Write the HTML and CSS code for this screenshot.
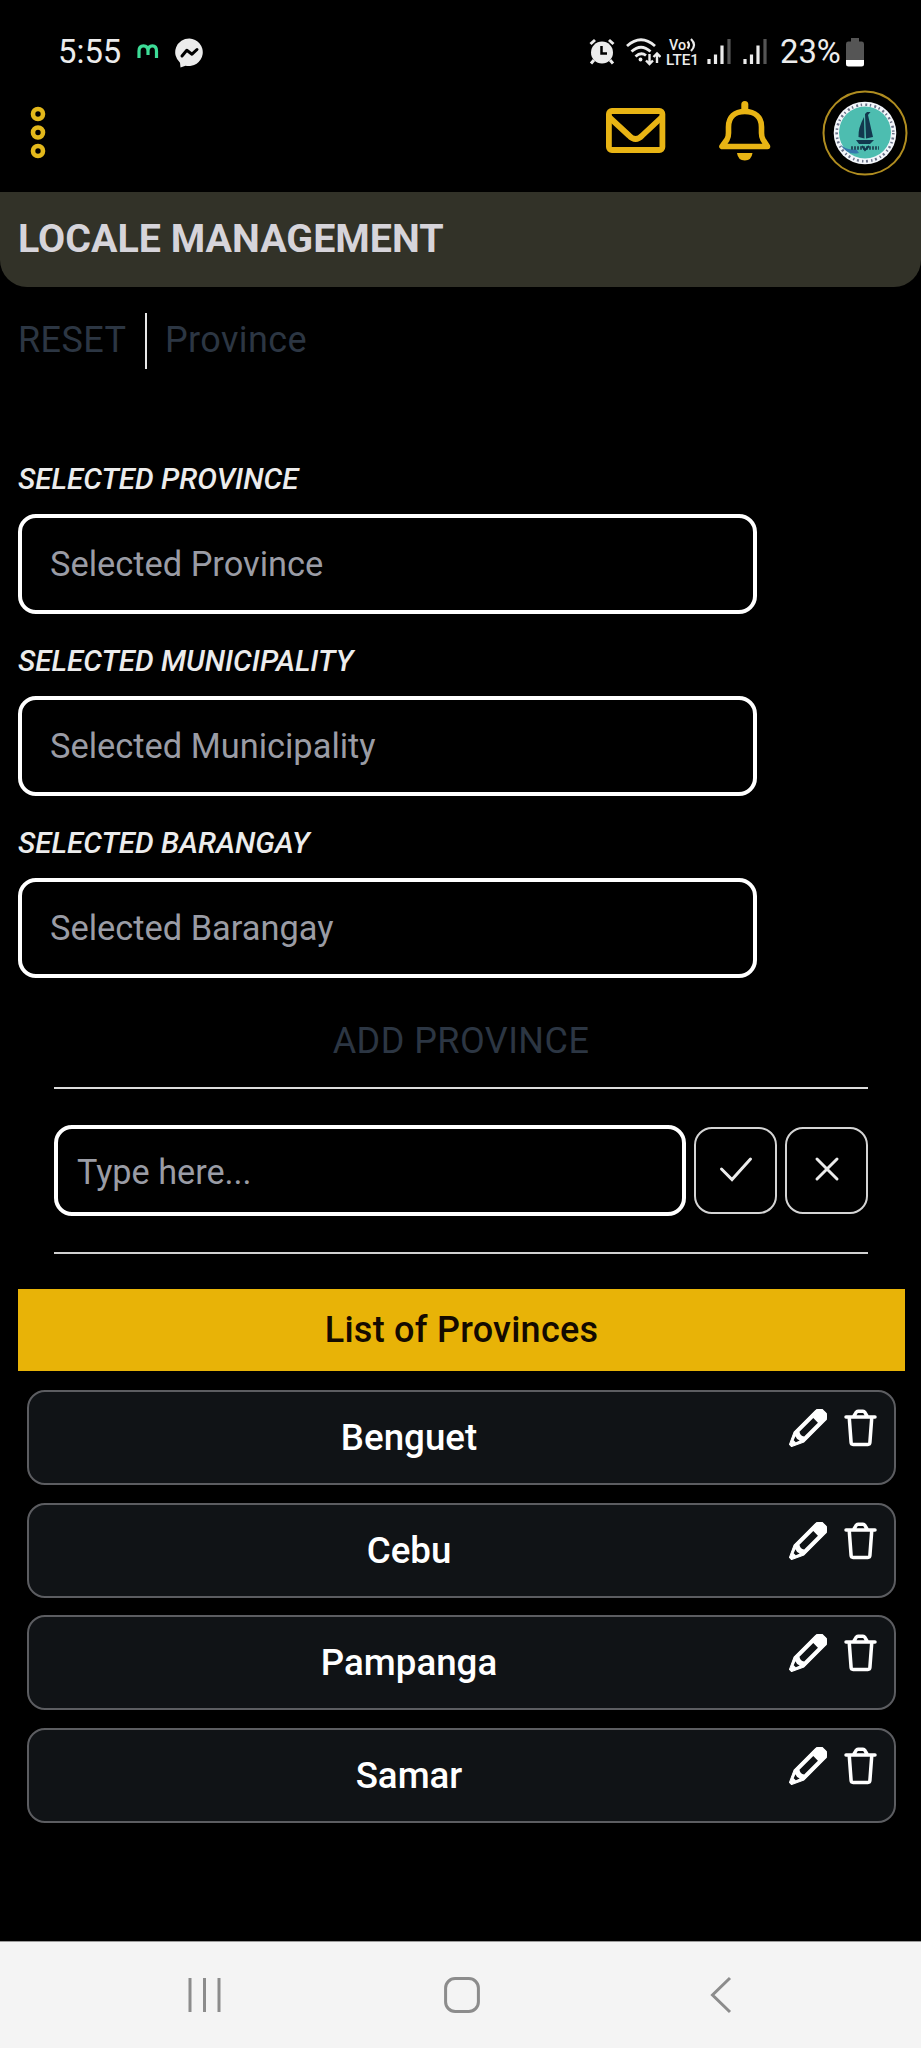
FILE: index.html
```html
<!DOCTYPE html>
<html lang="en">
<head>
<meta charset="utf-8">
<title>Locale Management</title>
<link rel="stylesheet" href="styles.css">
</head>
<body>
<svg class="defs" width="0" height="0" aria-hidden="true">
  <symbol id="pencil" viewBox="0 0 38 38">
    <g transform="translate(.8 37.200) rotate(-45)">
      <path d="M1 -1.500 L13 -7 H43 Q49 -7 49 -1.500 V1.500 Q49 7 43 7 H13 L1 1.500 Z" fill="currentColor" stroke="currentColor" stroke-width="1" stroke-linejoin="round"/>
      <path d="M17 -3.300 H36.500 V3.300 H17 Q14.500 0 17 -3.300 Z M7 -1.500 L11 -3 Q9.500 0 11 3 L7 1.500 Z" fill="#101316"/>
    </g>
  </symbol>
  <symbol id="trash" viewBox="0 0 32 38">
    <path d="M1.500 8 H30.500 M4.700 8 L6.600 33.500 A2 2 0 0 0 8.600 35.400 H23.400 A2 2 0 0 0 25.400 33.500 L27.300 8 M9.200 7.500 L11.800 3.200 Q12.300 2.200 13.500 2.200 H18.500 Q19.700 2.200 20.200 3.200 L22.800 7.500" fill="none" stroke="currentColor" stroke-width="3.500" stroke-linecap="round" stroke-linejoin="round"/>
  </symbol>
</svg>
<div class="screen">
  <div class="status">
    <span class="clock">5:55</span>
    <svg class="ic-m" width="22" height="16" viewBox="0 0 22 16"><path d="M2 14 V7 Q2 1.800 6.500 1.800 Q11 1.800 11 7 V11 M11 7 Q11 1.800 15.500 1.800 Q19.500 1.800 19.500 7 V14" fill="none" stroke="#3ddc97" stroke-width="3.200"/></svg>
    <svg class="ic-chat" width="29" height="30" viewBox="0 0 29 30"><path d="M14.500 .5 A14 13.800 0 1 1 10.500 27.700 L5.500 29.500 L5 24.700 A14 13.800 0 0 1 14.500 .5 Z" fill="#ececec"/><path d="M7 18 L11.800 12.300 L17 16.200 L22 11.500" fill="none" stroke="#000" stroke-width="3" stroke-linecap="round" stroke-linejoin="round"/></svg>
    <span class="grow"></span>
    <svg width="26" height="27" viewBox="0 0 26 27"><circle cx="13" cy="14.500" r="11" fill="#ececec"/><path d="M1.500 6 L6 2 M24.500 6 L20 2 M5 22 L2 25.500 M21 22 L24 25.500" stroke="#ececec" stroke-width="3"/><path d="M12.500 8 V15.500 H18" fill="none" stroke="#000" stroke-width="2.500"/></svg>
    <svg class="ic-wifi" width="35" height="28" viewBox="0 0 35 28"><g fill="none" stroke="#ececec" stroke-width="2.800"><path d="M1 8 Q15 -4.500 29 8 M5.500 13.500 Q15 5 24.500 13.500 M9.500 18.500 Q15 13.500 20 17.500"/><path d="M23.500 16 V26 M20 22.500 L23.500 26 L27 22.500 M31 25 V16 M27.500 19 L31 15.500 L34.500 19" stroke-width="2.400"/></g><circle cx="14.500" cy="21.500" r="1.900" fill="#ececec"/></svg>
    <svg class="ic-volte" width="34" height="28" viewBox="0 0 34 28"><g class="volte"><text x="3" y="12" textLength="17" lengthAdjust="spacingAndGlyphs">Vo</text><text x="0" y="27" textLength="33" lengthAdjust="spacingAndGlyphs">LTE1</text></g><path d="M21.500 3.500 Q24.500 7 21.500 10.500 M25 1 Q31 7 25 13" fill="none" stroke="#ececec" stroke-width="2.200"/></svg>
    <svg class="ic-sig" width="25" height="26" viewBox="0 0 25 26"><path d="M2 20 V25 M8.500 15.500 V25 M15 6.500 V25" stroke="#ececec" stroke-width="3.200"/><path d="M22 0 V25" stroke="#555" stroke-width="3.200"/></svg>
    <svg class="ic-sig2" width="25" height="26" viewBox="0 0 25 26"><path d="M2 20 V25 M8.500 15.500 V25 M15 6.500 V25" stroke="#ececec" stroke-width="3.200"/><path d="M22 0 V25" stroke="#555" stroke-width="3.200"/></svg>
    <span class="battery-level">23%</span>
    <svg class="ic-bat" width="18" height="29" viewBox="0 0 18 29"><path d="M5 0 H13 V3.500 H16 Q18 3.500 18 6 V22 H0 V6 Q0 3.500 2 3.500 H5 Z" fill="#555"/><path d="M0 22 H18 V26 Q18 28.500 15.500 28.500 H2.500 Q0 28.500 0 26 Z" fill="#fff"/></svg>
  </div>
  <header class="appbar">
    <svg width="16" height="54" viewBox="0 0 16 54"><g fill="none" stroke="#e3b81b" stroke-width="4.600"><circle cx="8" cy="8" r="5"/><circle cx="8" cy="26.500" r="5"/><circle cx="8" cy="45" r="5"/></g></svg>
    <span class="grow"></span>
    <svg class="ic-mail" width="60" height="46" viewBox="0 0 60 46"><g fill="none" stroke="#e8b414" stroke-width="5.800" stroke-linejoin="round"><rect x="2.900" y="4" width="53.500" height="39" rx="3"/><path d="M3 10 L23 28.500 Q29.600 35.500 36.200 28.500 L56 10"/></g></svg>
    <svg class="ic-bell" width="52" height="60" viewBox="0 0 52 60"><path d="M3 45.500 H48.500 L44 38.500 Q42.500 36 42.500 32 V26 C42.500 16 36 10.500 25.800 10.500 C15.500 10.500 9.500 16 9.500 26 V32 Q9.500 36 8 38.500 Z" fill="none" stroke="#e8b414" stroke-width="5.600" stroke-linejoin="round"/><path d="M25.800 9 V3.500" stroke="#e8b414" stroke-width="7" stroke-linecap="round"/><path d="M18 52 H33.500 Q32.500 59.500 25.800 59.500 Q19 59.500 18 52 Z" fill="#e8b414"/></svg>
    <svg class="avatar" width="86" height="86" viewBox="0 0 86 86">
      <circle cx="43" cy="43" r="41.500" fill="none" stroke="#b08d20" stroke-width="2"/>
      <circle cx="43" cy="43" r="31.300" fill="#f3f6fb"/>
      <circle cx="43" cy="43" r="28.300" fill="none" stroke="#6a7288" stroke-width="2.600" stroke-dasharray="1.400 3.200 2 2.600"/>
      <circle cx="43" cy="42.500" r="26" fill="#4dbdb0"/>
      <path d="M43 24 L45 22 H48.500 L46 25 L51 47 L44 48.500 Z M42 27 Q36 38 36.500 47 L42.500 48.500 Z M34 50 H52 L48 54 H37 Z" fill="#12384e"/>
      <path d="M18 54 Q24 61 34 59 L37 63 Q25 66 18 54 Z" fill="#3577ac"/>
      <path d="M29 58 H57" stroke="#22505c" stroke-width="3.500" stroke-dasharray="2 1"/>
      <path d="M40 56 L43 60 L47 56" fill="none" stroke="#12384e" stroke-width="2"/>
    </svg>
  </header>
  <h1 class="title">LOCALE MANAGEMENT</h1>
  <nav class="crumbs"><span class="reset">RESET</span><span class="crumb">Province</span></nav>
  <section class="fields">
    <label class="field"><span class="label">SELECTED PROVINCE</span><span class="box">Selected Province</span></label>
    <label class="field"><span class="label">SELECTED MUNICIPALITY</span><span class="box">Selected Municipality</span></label>
    <label class="field"><span class="label">SELECTED BARANGAY</span><span class="box">Selected Barangay</span></label>
  </section>
  <section class="add">
    <h2 class="add-title">ADD PROVINCE</h2>
    <div class="add-row">
      <div class="add-input">Type here...</div>
      <button class="btn"><svg width="34" height="26" viewBox="0 0 34 26"><path d="M2.500 13 L13 23.500 L31.500 3" fill="none" stroke="#ececec" stroke-width="3" stroke-linecap="round"/></svg></button>
      <button class="btn"><svg width="26" height="26" viewBox="0 0 26 26"><path d="M3 3 L23 23 M23 3 L3 23" fill="none" stroke="#ececec" stroke-width="3" stroke-linecap="round"/></svg></button>
    </div>
  </section>
  <h2 class="list-title">List of Provinces</h2>
  <ul class="list">
    <li class="item"><span class="name">Benguet</span><svg class="pencil"><use href="#pencil"/></svg><svg class="trash"><use href="#trash"/></svg></li>
    <li class="item"><span class="name">Cebu</span><svg class="pencil"><use href="#pencil"/></svg><svg class="trash"><use href="#trash"/></svg></li>
    <li class="item"><span class="name">Pampanga</span><svg class="pencil"><use href="#pencil"/></svg><svg class="trash"><use href="#trash"/></svg></li>
    <li class="item"><span class="name">Samar</span><svg class="pencil"><use href="#pencil"/></svg><svg class="trash"><use href="#trash"/></svg></li>
  </ul>
  <footer class="sysnav">
    <svg width="34" height="36" viewBox="0 0 34 36"><path d="M2 1 V35 M16.500 1 V35 M31 1 V35" stroke="#8c8c8c" stroke-width="3"/></svg>
    <svg class="home" width="36" height="36" viewBox="0 0 36 36"><rect x="1.600" y="1.600" width="32.800" height="32.800" rx="9.500" fill="none" stroke="#8c8c8c" stroke-width="3"/></svg>
    <svg width="22" height="38" viewBox="0 0 22 38"><path d="M20 2 L2.500 19 L20 36" fill="none" stroke="#8c8c8c" stroke-width="3"/></svg>
  </footer>
</div>
</body>
</html>
```

FILE: styles.css
```css
* { box-sizing: border-box; margin: 0; padding: 0; }
body { background: #000; color: #ececec; font-family: Roboto, sans-serif; font-size: 36px; }
svg { display: block; flex: none; }
.defs { height: 0; }
.screen { width: 921px; height: 2048px; display: flex; flex-direction: column; }
.grow { flex: 1; }

.status { height: 86px; padding: 38px 57px 0 58px; display: flex; align-items: flex-start; }
.clock, .battery-level { font-size: 32.800px; line-height: 28px; height: 28px; white-space: nowrap; }
.clock { width: 79px; }
.ic-m { margin-top: 6px; margin-right: 16px; }
.ic-wifi { margin-left: 11px; }
.ic-volte { margin-left: 5px; overflow: visible; }
.volte { font-size: 15px; font-weight: 500; fill: #ececec; }
.ic-sig { margin: 1px 0 0 7px; }
.ic-sig2 { margin: 1px 12px 0 11px; }
.battery-level { width: 66px; }

.appbar { height: 106px; padding: 0 13px 0 30px; display: flex; align-items: flex-start; }
.appbar > svg:first-child { margin-top: 20px; }
.ic-mail { margin: 21px 53px 0 0; }
.ic-bell { margin: 15px 51px 0 0; }
.avatar { margin-top: 4px; }

.title { height: 95px; flex: none; padding-left: 18px; line-height: 94px; font-size: 39.400px; font-weight: 700; color: #d6d4da; background: #323228; border-radius: 0 0 27px 27px; }
.crumbs { display: flex; height: 56px; margin-top: 26px; line-height: 55px; letter-spacing: .4px; color: #2c3643; }
.reset { width: 147px; padding-left: 18px; border-right: 2px solid #e8e8e8; }
.crumb { padding-left: 18px; }

.fields { margin: 90px 0 0 18px; width: 739px; }
.field { display: block; height: 182px; }
.label { display: block; height: 54.500px; line-height: 40px; font-size: 29.500px; font-weight: 500; font-style: italic; }
.box { display: block; height: 100.500px; border: 4px solid #fff; border-radius: 18px; padding-left: 28px; font-size: 34.400px; line-height: 93px; color: #9a9ca5; }

.add { margin: 0 53px 0 54px; height: 249px; border-bottom: 2px solid #d0d0d0; }
.add-title { height: 84px; border-bottom: 2px solid #dcdcdc; text-align: center; font-weight: 400; font-size: 36px; letter-spacing: .45px; line-height: 72px; color: #2c3643; }
.add-row { display: flex; align-items: center; gap: 8px; margin-top: 36px; }
.add-input { width: 632px; height: 91px; border: 4px solid #fff; border-radius: 18px; padding-left: 19px; font-size: 34.200px; line-height: 86px; color: #9a9ca5; }
.btn { width: 83px; height: 87px; border: 2px solid #d4d4d4; border-radius: 18px; background: none; display: flex; align-items: center; justify-content: center; padding-bottom: 3px; }

.list-title { margin: 35px 16px 18px 18px; height: 82px; background: #e8b307; color: #140a00; font-size: 36px; font-weight: 500; letter-spacing: .25px; line-height: 82px; text-align: center; }
.list { list-style: none; margin: 0 25px 0 27px; padding-top: 1px; display: flex; flex-direction: column; gap: 17.700px; flex: 1; }
.item { height: 95px; border: 2px solid #5c5d61; border-radius: 18px; background: #101316; color: #fff; display: flex; padding: 17px 17px 0 17px; }
.name { flex: 1; height: 56px; margin-right: 17px; line-height: 57px; font-size: 36.700px; text-align: center; font-weight: 500; }
.pencil { width: 38px; height: 38px; margin-right: 17px; }
.trash { width: 33px; height: 38px; }

.sysnav { flex: none; height: 107px; background: #f4f4f4; border-top: 1px solid #999; display: flex; align-items: center; padding-left: 188px; }
.home { margin: 0 230px 0 222px; }
```
